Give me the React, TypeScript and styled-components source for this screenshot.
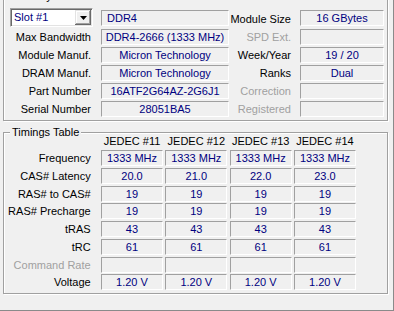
import React from "react";
import styled, { createGlobalStyle } from "styled-components";

const GlobalStyle = createGlobalStyle`
  html, body {
    margin: 0;
    padding: 0;
    background: #f0f0f0;
  }
  body {
    font-family: Tahoma, "Liberation Sans", Arial, sans-serif;
    font-size: 11px;
  }
`;

const Page = styled.div`
  width: 394px;
  height: 311px;
  box-sizing: border-box;
  overflow: hidden;
  background: #f0f0f0;
  border-right: 1px solid #8a8a8a;
  border-bottom: 1px solid #8a8a8a;
`;

const Group = styled.div<{ $gap: number }>`
  position: relative;
  box-sizing: border-box;
  width: 385px;
  margin-left: 3px;
  margin-top: ${(p) => p.$gap}px;
  border: 1px solid #a0a0a0;
  box-shadow: inset 1px 1px 0 #fff, 1px 1px 0 #fff;
`;

const Caption = styled.span`
  position: absolute;
  left: 6px;
  top: -8px;
  padding: 0 2px;
  line-height: 14px;
  background: #f0f0f0;
  color: #000;
  white-space: nowrap;
`;

const SlotGrid = styled.div`
  display: grid;
  grid-template-columns: 97px 128px 71px 84px;
  grid-auto-rows: 16px;
  row-gap: 2px;
  padding: 14px 2px 3px 0;
`;

const TimingGrid = styled.div`
  display: grid;
  grid-template-columns: 94.67px repeat(4, 62px);
  grid-template-rows: 14.25px;
  grid-auto-rows: 16px;
  column-gap: 2.33px;
  row-gap: 1.75px;
  padding: 1px 0 3px 0;
`;

const Label = styled.div<{ $disabled?: boolean; $pad: number }>`
  text-align: right;
  padding-right: ${(p) => p.$pad}px;
  line-height: 16px;
  white-space: nowrap;
  color: ${(p) => (p.$disabled ? "#a0a0a0" : "#000")};
`;

const Header = styled.div`
  text-align: center;
  line-height: 14px;
  color: #000;
  white-space: nowrap;
`;

const Field = styled.div<{ $align?: "left" | "center"; $lift?: number }>`
  box-sizing: border-box;
  height: 16px;
  margin-top: ${(p) => -(p.$lift || 0)}px;
  border-style: solid;
  border-width: 1px;
  border-color: #a0a0a0 #fff #fff #a0a0a0;
  color: #000080;
  line-height: 14px;
  text-align: ${(p) => p.$align || "center"};
  padding-left: ${(p) => (p.$align === "left" ? 5 : 0)}px;
  white-space: nowrap;
  overflow: hidden;
`;

const Combo = styled.div`
  box-sizing: border-box;
  display: flex;
  align-items: stretch;
  width: 83px;
  height: 19px;
  margin: -3px 0 0 6px;
  background: #fff;
  border-style: solid;
  border-width: 1px;
  border-color: #a0a0a0 #fff #fff #a0a0a0;
  box-shadow: inset 1px 1px 0 #696969, inset -1px -1px 0 #e3e3e3;
`;

const ComboText = styled.span`
  flex: 1;
  padding-left: 3px;
  line-height: 17px;
  color: #000080;
  white-space: nowrap;
`;

const ComboButton = styled.span`
  box-sizing: border-box;
  width: 16px;
  margin: 1px 1px 1px 0;
  display: flex;
  align-items: center;
  justify-content: center;
  background: #f0f0f0;
  box-shadow: inset -1px -1px 0 #696969, inset 1px 1px 0 #e3e3e3,
    inset -2px -2px 0 #a0a0a0, inset 2px 2px 0 #fff;
`;

type Row = {
  left: string;
  value: string;
  right: string;
  rightValue: string;
  rightDisabled?: boolean;
};

const slotRows: Row[] = [
  { left: "Max Bandwidth", value: "DDR4-2666 (1333 MHz)", right: "SPD Ext.", rightValue: "", rightDisabled: true },
  { left: "Module Manuf.", value: "Micron Technology", right: "Week/Year", rightValue: "19 / 20" },
  { left: "DRAM Manuf.", value: "Micron Technology", right: "Ranks", rightValue: "Dual" },
  { left: "Part Number", value: "16ATF2G64AZ-2G6J1", right: "Correction", rightValue: "", rightDisabled: true },
  { left: "Serial Number", value: "28051BA5", right: "Registered", rightValue: "", rightDisabled: true },
];

const jedec = ["JEDEC #11", "JEDEC #12", "JEDEC #13", "JEDEC #14"];

const timings: { name: string; values: string[]; disabled?: boolean }[] = [
  { name: "Frequency", values: ["1333 MHz", "1333 MHz", "1333 MHz", "1333 MHz"] },
  { name: "CAS# Latency", values: ["20.0", "21.0", "22.0", "23.0"] },
  { name: "RAS# to CAS#", values: ["19", "19", "19", "19"] },
  { name: "RAS# Precharge", values: ["19", "19", "19", "19"] },
  { name: "tRAS", values: ["43", "43", "43", "43"] },
  { name: "tRC", values: ["61", "61", "61", "61"] },
  { name: "Command Rate", values: ["", "", "", ""], disabled: true },
  { name: "Voltage", values: ["1.20 V", "1.20 V", "1.20 V", "1.20 V"] },
];

const DownArrow = () => (
  <svg width="7" height="4" viewBox="0 0 7 4">
    <path d="M0 0H7L3.5 4Z" fill="#000" />
  </svg>
);

const App = () => {
  return (
    <Page>
      <GlobalStyle />
      <Group $gap={-4}>
        <Caption>Memory Slot Selection</Caption>
        <SlotGrid>
          <Combo>
            <ComboText>Slot #1</ComboText>
            <ComboButton>
              <DownArrow />
            </ComboButton>
          </Combo>
          <Field $align="left" $lift={1}>
            DDR4
          </Field>
          <Label $pad={9}>Module Size</Label>
          <Field $lift={1}>16 GBytes</Field>
          {slotRows.map((row, i) => (
            <React.Fragment key={i.toString()}>
              <Label $pad={10}>{row.left}</Label>
              <Field>{row.value}</Field>
              <Label $pad={9} $disabled={row.rightDisabled}>
                {row.right}
              </Label>
              <Field>{row.rightValue}</Field>
            </React.Fragment>
          ))}
        </SlotGrid>
      </Group>
      <Group $gap={11}>
        <Caption>Timings Table</Caption>
        <TimingGrid>
          <div />
          {jedec.map((h) => (
            <Header key={h}>{h}</Header>
          ))}
          {timings.map((t) => (
            <React.Fragment key={t.name}>
              <Label $pad={8} $disabled={t.disabled}>
                {t.name}
              </Label>
              {t.values.map((v, i) => (
                <Field key={i.toString()}>{v}</Field>
              ))}
            </React.Fragment>
          ))}
        </TimingGrid>
      </Group>
    </Page>
  );
};

export default App;
